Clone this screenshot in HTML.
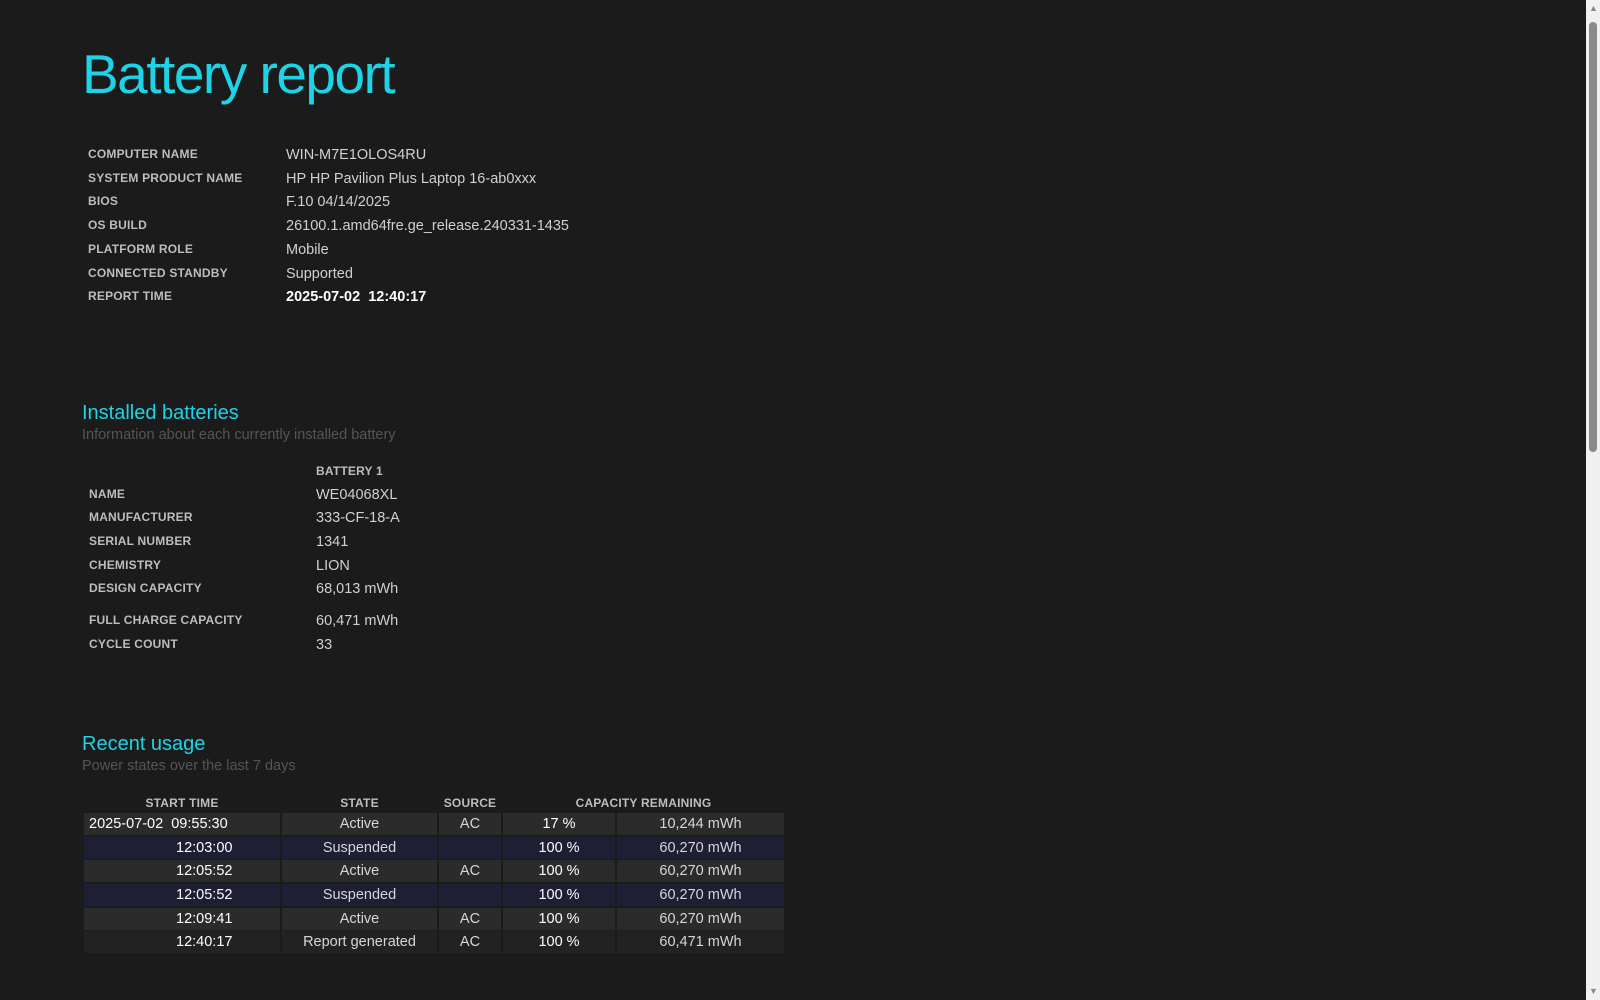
<!DOCTYPE html>
<html><head><meta charset="utf-8"><style>
html,body{margin:0;padding:0;width:1600px;height:1000px;overflow:hidden;background:#1b1b1b;font-family:"Liberation Sans",sans-serif;}
.a{position:absolute;white-space:nowrap;line-height:1;}
.t{left:82px;top:47px;font-size:55px;color:#1ed3e6;letter-spacing:-1.5px;}
.l{font-size:12px;font-weight:bold;color:#bdbdbd;letter-spacing:0.2px;transform:translateY(-6px);}
.v{font-size:14.5px;color:#d0d0d0;transform:translateY(-6px);}
.b{color:#fff;font-weight:bold;}
.h{font-size:20px;color:#1ed3e6;transform:translateY(-10px);}
.s{font-size:14.5px;color:#555;transform:translateY(-7px);}
.row{position:absolute;left:84px;width:700px;height:22px;}
.c{position:absolute;top:0;height:22px;line-height:23px;font-size:14.5px;color:#d6d6d6;}
.sb{position:absolute;left:1586px;top:0;width:14px;height:1000px;background:#f0f0f0;}
.th{position:absolute;left:1589px;top:22px;width:8px;height:430px;background:#8a8a8a;border-radius:4px;}
</style></head><body>
<div class="a t">Battery report</div>

<div class="a l" style="left:88px;top:154px">COMPUTER NAME</div><div class="a v" style="left:286px;top:154px">WIN-M7E1OLOS4RU</div>
<div class="a l" style="left:88px;top:178px">SYSTEM PRODUCT NAME</div><div class="a v" style="left:286px;top:178px">HP HP Pavilion Plus Laptop 16-ab0xxx</div>
<div class="a l" style="left:88px;top:201px">BIOS</div><div class="a v" style="left:286px;top:201px">F.10 04/14/2025</div>
<div class="a l" style="left:88px;top:225px">OS BUILD</div><div class="a v" style="left:286px;top:225px">26100.1.amd64fre.ge_release.240331-1435</div>
<div class="a l" style="left:88px;top:249px">PLATFORM ROLE</div><div class="a v" style="left:286px;top:249px">Mobile</div>
<div class="a l" style="left:88px;top:273px">CONNECTED STANDBY</div><div class="a v" style="left:286px;top:273px">Supported</div>
<div class="a l" style="left:88px;top:296px">REPORT TIME</div><div class="a v b" style="left:286px;top:296px">2025-07-02&nbsp; 12:40:17</div>

<div class="a h" style="left:82px;top:413px">Installed batteries</div>
<div class="a s" style="left:82px;top:435px">Information about each currently installed battery</div>
<div class="a l" style="left:316px;top:471px">BATTERY 1</div>
<div class="a l" style="left:89px;top:494px">NAME</div><div class="a v" style="left:316px;top:494px">WE04068XL</div>
<div class="a l" style="left:89px;top:517px">MANUFACTURER</div><div class="a v" style="left:316px;top:517px">333-CF-18-A</div>
<div class="a l" style="left:89px;top:541px">SERIAL NUMBER</div><div class="a v" style="left:316px;top:541px">1341</div>
<div class="a l" style="left:89px;top:565px">CHEMISTRY</div><div class="a v" style="left:316px;top:565px">LION</div>
<div class="a l" style="left:89px;top:588px">DESIGN CAPACITY</div><div class="a v" style="left:316px;top:588px">68,013 mWh</div>
<div class="a l" style="left:89px;top:620px">FULL CHARGE CAPACITY</div><div class="a v" style="left:316px;top:620px">60,471 mWh</div>
<div class="a l" style="left:89px;top:644px">CYCLE COUNT</div><div class="a v" style="left:316px;top:644px">33</div>

<div class="a h" style="left:82px;top:744px">Recent usage</div>
<div class="a s" style="left:82px;top:766px">Power states over the last 7 days</div>

<div class="a l" style="left:84px;width:196px;text-align:center;top:803px">START TIME</div>
<div class="a l" style="left:282px;width:155px;text-align:center;top:803px">STATE</div>
<div class="a l" style="left:439px;width:62px;text-align:center;top:803px">SOURCE</div>
<div class="a l" style="left:503px;width:281px;text-align:center;top:803px">CAPACITY REMAINING</div>

<div class="row" style="top:813px"><div class="c" style="left:0;width:196px;background:#2b2b2b"><span style="padding-left:5px;color:#fff">2025-07-02&nbsp; 09:55:30</span></div><div class="c" style="left:198px;width:155px;background:#2b2b2b;text-align:center">Active</div><div class="c" style="left:355px;width:62px;background:#2b2b2b;text-align:center">AC</div><div class="c" style="left:419px;width:112px;background:#2b2b2b;text-align:center;color:#fff">17 %</div><div class="c" style="left:533px;width:167px;background:#2b2b2b;text-align:center">10,244 mWh</div></div>
<div class="row" style="top:837px"><div class="c" style="left:0;width:196px;background:#1e1e34"><span style="position:absolute;left:92px;color:#fff">12:03:00</span></div><div class="c" style="left:198px;width:155px;background:#1e1e34;text-align:center">Suspended</div><div class="c" style="left:355px;width:62px;background:#1e1e34;text-align:center"></div><div class="c" style="left:419px;width:112px;background:#1e1e34;text-align:center;color:#fff">100 %</div><div class="c" style="left:533px;width:167px;background:#1e1e34;text-align:center">60,270 mWh</div></div>
<div class="row" style="top:860px"><div class="c" style="left:0;width:196px;background:#2b2b2b"><span style="position:absolute;left:92px;color:#fff">12:05:52</span></div><div class="c" style="left:198px;width:155px;background:#2b2b2b;text-align:center">Active</div><div class="c" style="left:355px;width:62px;background:#2b2b2b;text-align:center">AC</div><div class="c" style="left:419px;width:112px;background:#2b2b2b;text-align:center;color:#fff">100 %</div><div class="c" style="left:533px;width:167px;background:#2b2b2b;text-align:center">60,270 mWh</div></div>
<div class="row" style="top:884px"><div class="c" style="left:0;width:196px;background:#1e1e34"><span style="position:absolute;left:92px;color:#fff">12:05:52</span></div><div class="c" style="left:198px;width:155px;background:#1e1e34;text-align:center">Suspended</div><div class="c" style="left:355px;width:62px;background:#1e1e34;text-align:center"></div><div class="c" style="left:419px;width:112px;background:#1e1e34;text-align:center;color:#fff">100 %</div><div class="c" style="left:533px;width:167px;background:#1e1e34;text-align:center">60,270 mWh</div></div>
<div class="row" style="top:908px"><div class="c" style="left:0;width:196px;background:#2b2b2b"><span style="position:absolute;left:92px;color:#fff">12:09:41</span></div><div class="c" style="left:198px;width:155px;background:#2b2b2b;text-align:center">Active</div><div class="c" style="left:355px;width:62px;background:#2b2b2b;text-align:center">AC</div><div class="c" style="left:419px;width:112px;background:#2b2b2b;text-align:center;color:#fff">100 %</div><div class="c" style="left:533px;width:167px;background:#2b2b2b;text-align:center">60,270 mWh</div></div>
<div class="row" style="top:931px"><div class="c" style="left:0;width:196px;background:#222"><span style="position:absolute;left:92px;color:#fff">12:40:17</span></div><div class="c" style="left:198px;width:155px;background:#222;text-align:center">Report generated</div><div class="c" style="left:355px;width:62px;background:#222;text-align:center">AC</div><div class="c" style="left:419px;width:112px;background:#222;text-align:center;color:#fff">100 %</div><div class="c" style="left:533px;width:167px;background:#222;text-align:center">60,471 mWh</div></div>

<div class="sb"></div><div class="th"></div>
<div class="a" style="left:1589px;top:4px;font-size:9px;color:#888">▲</div>
<div class="a" style="left:1589px;top:987px;font-size:9px;color:#888">▼</div>
</body></html>
